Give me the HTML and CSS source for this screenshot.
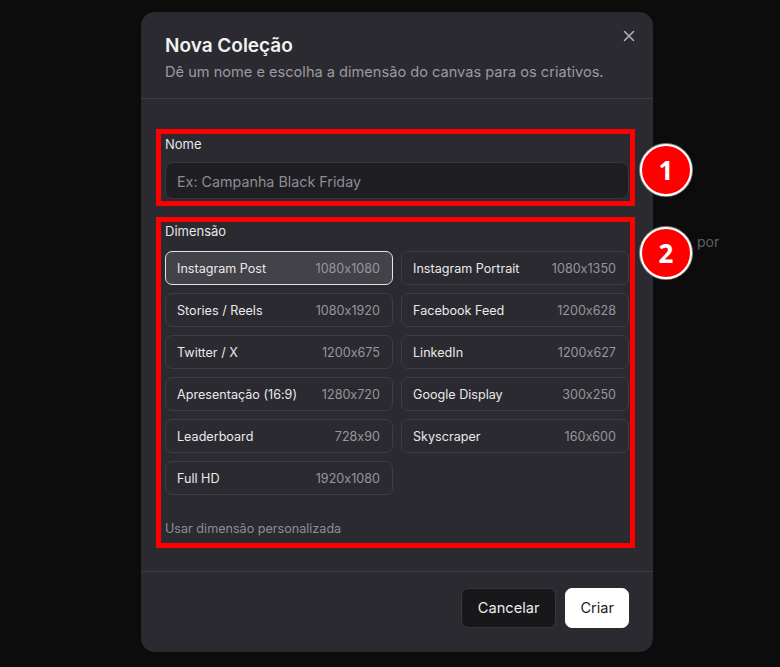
FILE: index.html
```html
<!DOCTYPE html>
<html lang="pt-br">
<head>
    <meta charset="UTF-8">
    <meta name="viewport" content="width=device-width, initial-scale=1.0">
    <title>Nova Coleção</title>
    <link rel="stylesheet" href="styles.css">
</head>
<body>
    <span class="backdrop-text">por</span>

    <div class="modal">
        <div class="modal-header">
            <h1>Nova Coleção</h1>
            <p>Dê um nome e escolha a dimensão do canvas para os criativos.</p>
            <button class="close" type="button" aria-label="Fechar">
                <svg width="12" height="12" viewBox="0 0 12 12"><path d="M1.5 1.5l9 9M10.5 1.5l-9 9" stroke="currentColor" stroke-width="1.5" stroke-linecap="round"/></svg>
            </button>
        </div>

        <div class="modal-body">
            <div class="field">
                <label for="name">Nome</label>
                <input type="text" id="name" placeholder="Ex: Campanha Black Friday">
            </div>

            <div class="field field-size">
                <label>Dimensão</label>
                <div class="sizes">
                    <button class="size active" type="button"><span>Instagram Post</span><span class="px">1080x1080</span></button>
                    <button class="size" type="button"><span>Instagram Portrait</span><span class="px">1080x1350</span></button>
                    <button class="size" type="button"><span>Stories / Reels</span><span class="px">1080x1920</span></button>
                    <button class="size" type="button"><span>Facebook Feed</span><span class="px">1200x628</span></button>
                    <button class="size" type="button"><span>Twitter / X</span><span class="px">1200x675</span></button>
                    <button class="size" type="button"><span>LinkedIn</span><span class="px">1200x627</span></button>
                    <button class="size" type="button"><span>Apresentação (16:9)</span><span class="px">1280x720</span></button>
                    <button class="size" type="button"><span>Google Display</span><span class="px">300x250</span></button>
                    <button class="size" type="button"><span>Leaderboard</span><span class="px">728x90</span></button>
                    <button class="size" type="button"><span>Skyscraper</span><span class="px">160x600</span></button>
                    <button class="size" type="button"><span>Full HD</span><span class="px">1920x1080</span></button>
                </div>
                <a class="custom" href="#">Usar dimensão personalizada</a>
            </div>
        </div>

        <div class="modal-footer">
            <button class="btn btn-ghost" type="button">Cancelar</button>
            <button class="btn btn-primary" type="button">Criar</button>
        </div>
    </div>

    <!-- marcações numeradas -->
    <div class="mark mark-1"></div>
    <div class="mark mark-2"></div>
    <div class="pin pin-1">1</div>
    <div class="pin pin-2">2</div>
</body>
</html>
```

FILE: styles.css
```css
* {
    margin: 0;
    padding: 0;
    box-sizing: border-box;
}

body {
    font-family: Inter, "Noto Sans", sans-serif;
    font-feature-settings: "calt" 0;
    background-color: #0c0c0d;
    height: 100vh;
    overflow: hidden;
    position: relative;
    padding: 12px 0 0 141px;
}

.backdrop-text {
    position: absolute;
    left: 697px;
    top: 233px;
    font-size: 14px;
    color: #5f5f66;
}

.modal {
    width: 512px;
    height: 640px;
    background-color: #2b2a30;
    border-radius: 14px;
    display: flex;
    flex-direction: column;
    position: relative;
}

.modal-header {
    padding: 22px 24px 16px;
    border-bottom: 1px solid #3e3d44;
}

.modal-header h1 {
    font-size: 19px;
    line-height: 24px;
    font-weight: 600;
    color: #f2f2f3;
}

.modal-header p {
    margin-top: 4px;
    font-size: 14.6px;
    line-height: 20px;
    color: #9b9aa1;
}

.close {
    position: absolute;
    top: 18px;
    right: 18px;
    width: 12px;
    height: 12px;
    background: none;
    border: none;
    color: #b4b3b9;
    display: flex;
}

.modal-body {
    flex: 1;
    padding: 36px 24px 0;
}

.field label {
    display: block;
    font-size: 13px;
    line-height: 18px;
    color: #e6e6e8;
    margin-bottom: 9px;
}

.field input {
    width: 100%;
    height: 37px;
    padding: 1px 11px 0;
    background-color: #1f1e23;
    border: 1px solid #36353b;
    border-radius: 8px;
    font-family: inherit;
    font-size: 14.3px;
    color: #eee;
}

.field input::placeholder {
    color: #8d8c93;
}

.field-size {
    margin-top: 23px;
}

.field-size label {
    margin-bottom: 11px;
}

.sizes {
    display: grid;
    grid-template-columns: 1fr 1fr;
    gap: 8px;
}

.size {
    height: 34px;
    padding: 0 12px 0 11px;
    display: flex;
    justify-content: space-between;
    align-items: center;
    background-color: transparent;
    border: 1px solid #3d3c43;
    border-radius: 7px;
    font-family: inherit;
    font-feature-settings: "calt" 0;
    font-size: 12.6px;
    color: #e9e9eb;
}

.size .px {
    color: #97969d;
}

.size.active {
    background-color: #434248;
    border-color: #e4e4e6;
}

.custom {
    display: block;
    margin-top: 26px;
    font-size: 12.6px;
    line-height: 16px;
    color: #8e8d94;
    text-decoration: none;
}

.modal-footer {
    height: 81px;
    border-top: 1px solid #3e3d44;
    padding: 16px 24px 0;
    display: flex;
    justify-content: flex-end;
    align-items: flex-start;
    gap: 9px;
}

.btn {
    height: 40px;
    padding: 0 16px;
    border-radius: 7px;
    font-family: inherit;
    font-size: 14.6px;
}

.btn-ghost {
    background-color: #18181b;
    border: 1px solid #38373d;
    color: #ececee;
}

.btn-primary {
    padding: 0 14px;
    background-color: #fff;
    border: 1px solid #fff;
    color: #222;
}

.mark {
    position: absolute;
    left: 156px;
    width: 479px;
    border: 5px solid #ff0000;
}

.mark-1 {
    top: 129px;
    height: 77px;
}

.mark-2 {
    top: 217px;
    height: 331px;
}

.pin {
    position: absolute;
    left: 640px;
    width: 52px;
    height: 52px;
    border-radius: 50%;
    background-color: #ff0000;
    border: 2px solid #fff;
    box-shadow: 0 0 0 1px #888;
    color: #fff;
    font-family: "Open Sans", sans-serif;
    font-weight: 700;
    font-size: 26px;
    display: flex;
    align-items: center;
    justify-content: center;
}

.pin-1 {
    top: 144px;
}

.pin-2 {
    top: 227px;
}
```
